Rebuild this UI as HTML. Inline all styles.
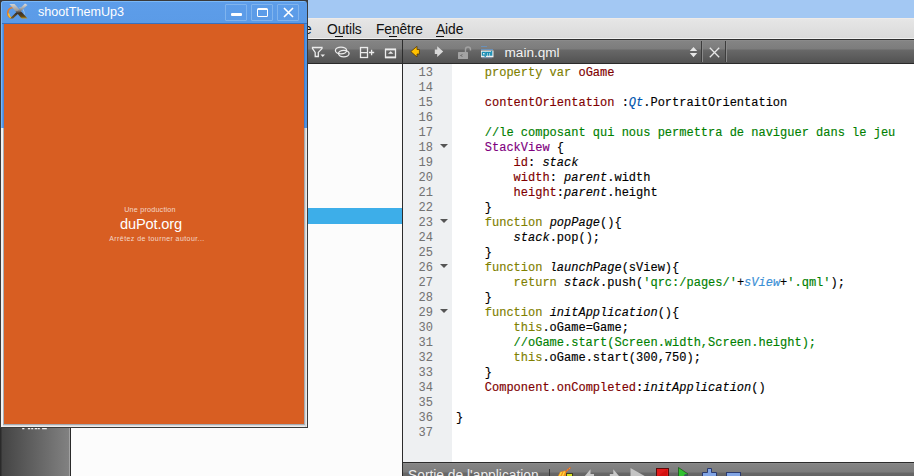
<!DOCTYPE html>
<html><head><meta charset="utf-8">
<style>
*{margin:0;padding:0;box-sizing:border-box}
html,body{width:914px;height:476px;overflow:hidden;background:#fcfcfc;position:relative;font-family:"Liberation Sans",sans-serif}
.a{position:absolute}
#topband{left:0;top:0;width:914px;height:18px;background:#a3c8f3}
#menubar{left:0;top:18px;width:914px;height:22px;background:linear-gradient(#efebe8 0,#efebe8 1px,#e6e6e6 1px,#dadada 20px,#f0f0f0 20px);border-bottom:1px solid #2f2f2f}
#menubar span{position:absolute;top:4px;font-size:13.8px;color:#101010;letter-spacing:-0.1px}
#menubar i{position:absolute;top:18px;height:1px;background:#111}
u{text-decoration:none;border-bottom:1px solid #202020}
.tb{background:linear-gradient(#909090 0,#848484 1px,#7c7c7c 9px,#686868 10px,#525252 23px);border-bottom:1px solid #2a2a2a}
#lefttb{left:307px;top:40px;width:96px;height:24px}
#edtb{left:403px;top:40px;width:511px;height:24px}
#vsep{left:402px;top:39px;width:1px;height:437px;background:#2c2c2c}
#leftpanel{left:71px;top:64px;width:331px;height:412px;background:#fcfcfc}
#sel{left:308px;top:208px;width:94px;height:16px;background:#3daee9}
#gutter{left:403px;top:64px;width:49px;height:398px;background:#eef0f2}
#code{left:452px;top:64px;width:462px;height:398px;background:#fff}
.ln{position:absolute;left:403px;width:30px;text-align:right;font-family:"Liberation Mono",monospace;font-size:12px;color:#737373;-webkit-text-stroke:0.05px currentColor;line-height:15px;height:15px}
.cl{position:absolute;left:456px;font-family:"Liberation Mono",monospace;font-size:12px;color:#000;line-height:15px;height:15px;white-space:pre;-webkit-text-stroke:0.15px currentColor}
.k{color:#808000}.p{color:#800000}.c{color:#008000}.t{color:#800080}.i{font-style:italic}.b{color:#0055af;font-style:italic}.sv{color:#3a8fd6;font-style:italic}
.fold{position:absolute;left:440px;width:0;height:0;border-left:4px solid transparent;border-right:4px solid transparent;border-top:4.5px solid #555}
#outtb{left:403px;top:462px;width:511px;height:14px;background:linear-gradient(#2c2c2c 0,#2c2c2c 1px,#909090 1px,#848484 2px,#7c7c7c 10px,#686868 11px,#646464 14px)}
#modebar{left:0;top:40px;width:70px;height:436px;background:linear-gradient(90deg,#2a2a2a 0,#2a2a2a 1px,#444 2px,#818181 69px)}
#modesep{left:70px;top:40px;width:1px;height:436px;background:#2a2a2a}
/* floating window */
#win{left:0;top:0;width:308px;height:428px;background:#3a3a3a}
#wtb{left:1px;top:1px;width:306px;height:23px;border-radius:3px 3px 0 0;background:linear-gradient(#7ab8f8 0,#7ab8f8 1px,#5d9de9 1px,#5b9be7 22px,#3670c0 22px);box-shadow:inset 1px 0 0 #78b6f6}
#orange{left:4px;top:24px;width:300px;height:400px;background:#d85e22}
#wtitle{left:38px;top:5px;font-size:12.6px;color:#fff}
.wb{position:absolute;top:4px;width:22px;height:17px;border:1px solid #80b4ee;border-radius:1px}
</style></head><body>
<div id="topband" class="a"></div>
<div id="menubar" class="a">
 <span style="left:304px">e</span>
 <span style="left:327px">Outils</span>
 <span style="left:376px">Fenêtre</span>
 <span style="left:436px">Aide</span>
 <i style="left:335px;width:8px"></i>
 <i style="left:389px;width:8px"></i>
 <i style="left:436px;width:8px"></i>
</div>
<div id="modebar" class="a"></div>
<div id="modesep" class="a"></div>
<div class="a" style="left:69px;top:40px;width:1px;height:436px;background:#a2a2a2"></div>
<svg class="a" style="left:0;top:427px" width="70" height="3" viewBox="0 427 70 3"><path d="M22.2 428.6H24.4M27.9 428.6H30.2M31.2 428.6H33.2M34.7 428.6H37M37.6 428.6H39.8M42.1 428.6H46.8" stroke="#f4f4f4" stroke-width="1.2"/></svg>

<div id="leftpanel" class="a"></div>
<div id="lefttb" class="a tb"></div>
<div id="edtb" class="a tb"></div>
<!--TBICONS-->
<svg class="a" style="left:307px;top:40px" width="96" height="23" viewBox="307 40 96 23" fill="none" stroke="#ececec" stroke-width="1.3">
 <path d="M312.5 47.5 H322 V48.6 L318.3 52.4 V56.5 H315.2 V52.4 L312.5 48.6 Z"/>
 <path d="M320.5 54.5 H325 L322.75 57 Z" fill="#ececec" stroke="none"/>
 <ellipse cx="341" cy="50.5" rx="5.6" ry="3.3"/>
 <ellipse cx="343.8" cy="53.6" rx="5.3" ry="3.3"/>
 <rect x="360.5" y="47.5" width="7" height="10"/>
 <path d="M360.5 52.6 H367.5 M369 52.5 H374.2 M371.6 49.8 V55.2"/>
 <rect x="385.5" y="49.5" width="10" height="8"/>
 <path d="M385 49.3 H396 M385 57.3 H396" stroke-width="1.8"/>
 <path d="M388 53.8 L390.7 51.2 L393.4 53.8 Z" fill="#ececec" stroke="none"/>
</svg>
<svg class="a" style="left:403px;top:40px" width="511" height="23" viewBox="403 40 511 23">
 <path d="M410.8 51.6 L417 46.3 V49.5 H419.4 V54 H417 V57 Z" fill="#ffc000" stroke="#5a3a00" stroke-width="0.8" stroke-linejoin="round"/>
 <path d="M443.2 51.6 L437.2 46.3 V49.5 H434.8 V54 H437.2 V57 Z" fill="#d8d8d8"/>
 <rect x="458" y="52" width="10" height="7" fill="#a2a2a2" rx="0.5"/>
 <path d="M462 54.5 L461 55.5 L462 56.5" stroke="#444" stroke-width="1" fill="none"/>
 <path d="M465.5 52 V49.5 A2.5 2.5 0 0 1 470.5 49.5 V50.5" stroke="#a2a2a2" stroke-width="1.4" fill="none"/>
 <path d="M481 46.5 H487 M481 49.5 H493" stroke="#6a90b8" stroke-width="1"/>
 <rect x="481" y="50.5" width="12.5" height="6.8" fill="#eef0f0"/><path d="M482 57.8 H492" stroke="#7a9ac0" stroke-width="0.8"/>
 <path d="M482.4 52.4 H485.2 V55.2 H482.4 Z M485.2 55 V57 M486.6 55.8 V52.4 H490.3 V55.8 M488.45 52.4 V55.8 M491.7 50.8 V55.8" stroke="#1a8fb5" stroke-width="1.3" fill="none"/>
 <text x="504.5" y="56.8" font-family="Liberation Sans" font-size="13.6" fill="#f2f2f2">main.qml</text>
 <path d="M689.8 51 L693.5 47 L697.2 51 Z M689.8 53 L693.5 57.3 L697.2 53 Z" fill="#e6e6e6"/>
 <path d="M701.5 41 V62" stroke="#3c3c3c" stroke-width="1"/>
 <path d="M702.5 41 V62" stroke="#8a8a8a" stroke-width="1"/>
 <path d="M709.8 47.8 L719.2 57.2 M719.2 47.8 L709.8 57.2" stroke="#e6e6e6" stroke-width="1.3"/>
 <path d="M725.5 41 V62" stroke="#3c3c3c" stroke-width="1"/>
 <path d="M726.5 41 V62" stroke="#8a8a8a" stroke-width="1"/>
</svg>
<!--/TBICONS-->
<div id="sel" class="a"></div>
<div id="gutter" class="a"></div>
<div id="code" class="a"></div>
<div id="vsep" class="a"></div>
<!--CODE-->
<div class="ln" style="top:66px">13</div>
<div class="cl" style="top:66px">    <span class="k">property var</span> <span class="p">oGame</span></div>
<div class="ln" style="top:81px">14</div>
<div class="ln" style="top:96px">15</div>
<div class="cl" style="top:96px">    <span class="p">contentOrientation</span> :<span class="b">Qt</span>.PortraitOrientation</div>
<div class="ln" style="top:111px">16</div>
<div class="ln" style="top:126px">17</div>
<div class="cl" style="top:126px">    <span class="c">//le composant qui nous permettra de naviguer dans le jeu</span></div>
<div class="ln" style="top:141px">18</div>
<div class="cl" style="top:141px">    <span class="t">StackView</span> {</div>
<div class="fold" style="top:144px"></div>
<div class="ln" style="top:156px">19</div>
<div class="cl" style="top:156px">        <span class="p">id</span>: <span class="i">stack</span></div>
<div class="ln" style="top:171px">20</div>
<div class="cl" style="top:171px">        <span class="p">width</span>: <span class="i">parent</span>.width</div>
<div class="ln" style="top:186px">21</div>
<div class="cl" style="top:186px">        <span class="p">height</span>:<span class="i">parent</span>.height</div>
<div class="ln" style="top:201px">22</div>
<div class="cl" style="top:201px">    }</div>
<div class="ln" style="top:216px">23</div>
<div class="cl" style="top:216px">    <span class="k">function</span> <span class="i">popPage</span>(){</div>
<div class="fold" style="top:219px"></div>
<div class="ln" style="top:231px">24</div>
<div class="cl" style="top:231px">        <span class="i">stack</span>.pop();</div>
<div class="ln" style="top:246px">25</div>
<div class="cl" style="top:246px">    }</div>
<div class="ln" style="top:261px">26</div>
<div class="cl" style="top:261px">    <span class="k">function</span> <span class="i">launchPage</span>(sView){</div>
<div class="fold" style="top:264px"></div>
<div class="ln" style="top:276px">27</div>
<div class="cl" style="top:276px">        <span class="k">return</span> <span class="i">stack</span>.push(<span class="c">'qrc:/pages/'</span>+<span class="sv">sView</span>+<span class="c">'.qml'</span>);</div>
<div class="ln" style="top:291px">28</div>
<div class="cl" style="top:291px">    }</div>
<div class="ln" style="top:306px">29</div>
<div class="cl" style="top:306px">    <span class="k">function</span> <span class="i">initApplication</span>(){</div>
<div class="fold" style="top:309px"></div>
<div class="ln" style="top:321px">30</div>
<div class="cl" style="top:321px">        <span class="k">this</span>.oGame=Game;</div>
<div class="ln" style="top:336px">31</div>
<div class="cl" style="top:336px">        <span class="c">//oGame.start(Screen.width,Screen.height);</span></div>
<div class="ln" style="top:351px">32</div>
<div class="cl" style="top:351px">        <span class="k">this</span>.oGame.start(300,750);</div>
<div class="ln" style="top:366px">33</div>
<div class="cl" style="top:366px">    }</div>
<div class="ln" style="top:381px">34</div>
<div class="cl" style="top:381px">    <span class="p">Component.onCompleted</span>:<span class="i">initApplication</span>()</div>
<div class="ln" style="top:396px">35</div>
<div class="ln" style="top:411px">36</div>
<div class="cl" style="top:411px">}</div>
<div class="ln" style="top:426px">37</div>
<!--/CODE-->
<div id="outtb" class="a"></div>

<!--OUTTB-->
<svg class="a" style="left:403px;top:462px" width="511" height="14" viewBox="403 462 511 14">
 <text x="408" y="480" font-family="Liberation Sans" font-size="13.8" fill="#ececec">Sortie de l'application</text>
 <path d="M549.5 469 V476" stroke="#3a3a3a" stroke-width="1"/>
 <path d="M570.5 467.5 L564 473" stroke="#e86a10" stroke-width="1.6"/><path d="M570 468 L564.5 472.6" stroke="#ffd0a0" stroke-width="0.5" stroke-dasharray="1 1.5"/>
 <path d="M558 476 L560 472 L565 470.5 L567 474 L566 476 Z" fill="#f09020"/>
 <path d="M559.5 476 L561.5 472 M562.5 476 L564.5 471.5" stroke="#ffe040" stroke-width="1.2"/>
 <rect x="566.5" y="473.5" width="6" height="4" fill="#d8e020" stroke="#404020" stroke-width="1"/>
 <path d="M594 474 H590.5 V469.2 L584 477 H594 Z" fill="#c8c8c8"/>
 <path d="M609.8 474 H613.3 V469.2 L619.8 477 H609.8 Z" fill="#c8c8c8"/>
 <path d="M630.5 468 L644.7 476 V477 H630.5 Z" fill="#c4c4c4"/>
 <rect x="656.5" y="468.5" width="12" height="10" fill="#e01a1a" stroke="#5a0a0a" stroke-width="1"/>
 <path d="M658 476 L667 469.5 V478 H658 Z" fill="#c80a0a" opacity="0.6"/>
 <path d="M678.5 467.5 L688 474 L678.5 480 Z" fill="#30c030" stroke="#1a5a1a" stroke-width="0.8"/>
 <circle cx="686" cy="476" r="2" fill="#405060"/>
 <path d="M707.5 468.5 H711.5 V472.5 H716.5 V478 H702.5 V472.5 H707.5 Z" fill="#80a4e4" stroke="#2a3a70" stroke-width="1"/>
 <rect x="726.5" y="472.5" width="14" height="6" fill="#80a4e4" stroke="#2a3a70" stroke-width="1"/>
</svg>
<!--/OUTTB-->
<div id="win" class="a"></div>
<div id="wtb" class="a"></div>
<div class="a" style="left:1px;top:24px;width:3px;height:104px;background:linear-gradient(90deg,#78b6f6 0,#78b6f6 1px,#5b9be7 1px,#5b9be7 2px,#4a88d8 2px)"></div>
<div class="a" style="left:304px;top:24px;width:3px;height:104px;background:linear-gradient(90deg,#3f7fd0 0,#3f7fd0 1px,#4f93e2 1px)"></div>
<div class="a" style="left:1px;top:128px;width:3px;height:299px;background:linear-gradient(90deg,#f2f2f2 0,#f2f2f2 2px,#a8b0b8 2px)"></div>
<div class="a" style="left:304px;top:128px;width:3px;height:299px;background:linear-gradient(90deg,#a4acb4 0,#a4acb4 1px,#d6d6d6 1px,#d6d6d6 2px,#e8e8e8 2px)"></div>
<div class="a" style="left:3px;top:424px;width:302px;height:3px;background:linear-gradient(#a4acb4 0,#a4acb4 1px,#d8d8d8 1px,#d8d8d8 2px,#ececec 2px)"></div>
<div id="orange" class="a"></div>
<svg class="a" style="left:0;top:0" width="34" height="24" viewBox="0 0 34 24">
 <defs>
  <linearGradient id="gx1" x1="0" y1="0" x2="0" y2="1"><stop offset="0" stop-color="#d4d4d4"/><stop offset="0.45" stop-color="#9a9a9a"/><stop offset="0.6" stop-color="#3a3028"/><stop offset="0.85" stop-color="#5a4418"/><stop offset="1" stop-color="#b89020"/></linearGradient>
  <linearGradient id="gx2" x1="0" y1="0" x2="0" y2="1"><stop offset="0" stop-color="#e4e4e4"/><stop offset="0.45" stop-color="#8a8a8a"/><stop offset="0.65" stop-color="#3a3028"/><stop offset="1" stop-color="#7a5a20"/></linearGradient>
 </defs>
 <path d="M19.5 7.5 A5.5 5.5 0 0 1 21 18" stroke="#c8dcea" stroke-width="1" fill="none" opacity="0.55"/>
 <path d="M13 7.5 A5.5 5.5 0 0 0 11 18" stroke="#f07a1a" stroke-width="1.7" fill="none" opacity="0.9"/>
 <path d="M8.6 13.5 A5.5 5.5 0 0 0 11 18" stroke="#ffcc30" stroke-width="1.4" fill="none"/>
 <path d="M9.5 4 L14.5 4 L27.5 18.5 L21.5 18.5 Z" fill="url(#gx1)"/>
 <path d="M25 3.5 L27.5 5 L13 18.5 L10 18.5 Z" fill="url(#gx2)"/>
</svg>
<div id="wtitle" class="a">shootThemUp3</div>
<div class="wb" style="left:225px"><div style="position:absolute;left:5px;top:8px;width:11px;height:3px;background:#fff;border-radius:1px"></div></div>
<div class="wb" style="left:251px"><div style="position:absolute;left:5px;top:3px;width:10.5px;height:8.5px;border:1.4px solid #fff;border-top-width:2.2px;border-radius:1.5px"></div></div>
<div class="wb" style="left:277px"><svg style="position:absolute;left:5px;top:2px" width="11" height="11" viewBox="0 0 11 11"><path d="M1 1L10 10M10 1L1 10" stroke="#fff" stroke-width="1.6"/></svg></div>
<div class="a" style="left:0;top:205px;width:300px;text-align:center;font-size:7.2px;line-height:9px;color:rgba(255,255,255,0.75);letter-spacing:0.2px">Une production</div>
<div class="a" style="left:1px;top:216px;width:300px;text-align:center;font-size:14.6px;line-height:17px;color:#fff;letter-spacing:-0.15px">duPot.org</div>
<div class="a" style="left:7px;top:234px;width:300px;text-align:center;font-size:7px;line-height:9px;color:rgba(255,255,255,0.75);letter-spacing:0.42px">Arrêtez de tourner autour...</div>
</body></html>
